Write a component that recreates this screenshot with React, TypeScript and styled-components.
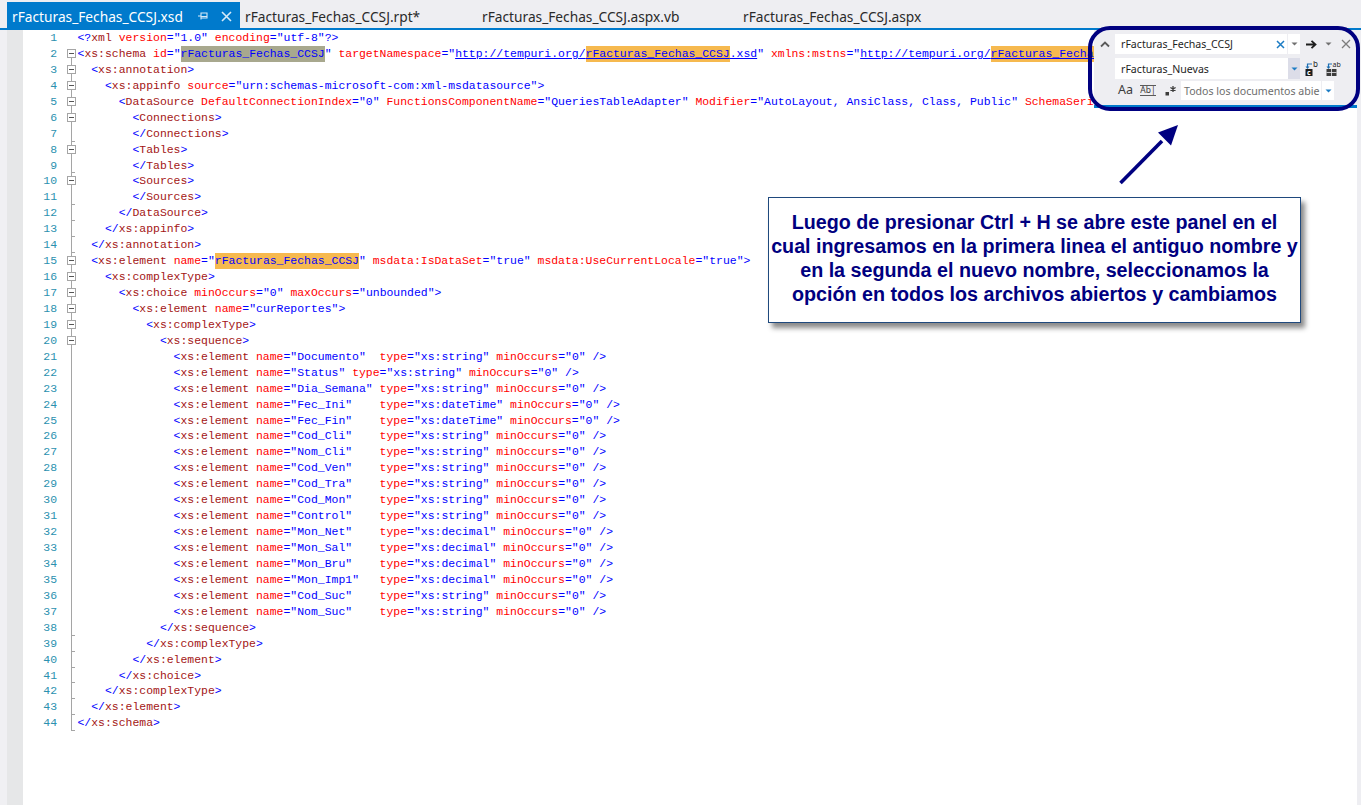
import React from 'react';
import styled, { createGlobalStyle } from 'styled-components';

const NAME = 'rFacturas_Fechas_CCSJ';

const GlobalStyle = createGlobalStyle`
  html, body {
    margin: 0;
    padding: 0;
    background: #ffffff;
    overflow: hidden;
  }
`;

const Page = styled.div`
  position: relative;
  width: 1361px;
  height: 805px;
  overflow: hidden;
  display: flex;
  flex-direction: column;
  background: #ffffff;
`;

const TabStrip = styled.div`
  display: flex;
  height: 28px;
  padding-left: 7px;
  background: #eeeef2;
  border-bottom: 2px solid #007acc;
  flex: none;
`;

const Tab = styled.div<{ $active?: boolean; $width: number }>`
  display: flex;
  align-items: center;
  width: ${(p) => p.$width}px;
  height: 28px;
  margin-top: 2px;
  padding-left: 5px;
  box-sizing: border-box;
  font-family: 'Noto Sans', sans-serif;
  font-size: 13.72px;
  white-space: pre;
  color: ${(p) => (p.$active ? '#ffffff' : '#2a2a2a')};
  background: ${(p) => (p.$active ? '#007acc' : 'transparent')};
`;

const TabIcon = styled.svg<{ $left: number }>`
  margin-left: ${(p) => p.$left}px;
  flex: none;
`;

const Editor = styled.div`
  display: flex;
  flex: 1;
  min-height: 0;
`;

const OuterStrip = styled.div`
  width: 7px;
  background: #f0f0f3;
  flex: none;
`;

const GlyphMargin = styled.div`
  width: 16px;
  background: #e6e7e8;
  flex: none;
`;

const Lines = styled.div`
  flex: 1;
  min-width: 0;
  overflow: hidden;
`;

const ScrollBar = styled.div`
  width: 4px;
  background: #eeeef2;
  flex: none;
`;

const Line = styled.div`
  display: flex;
  height: 15.95px;
  line-height: 16px;
  font-family: 'Liberation Mono', monospace;
  font-size: 11.45px;
  white-space: pre;
`;

const LineNo = styled.div`
  width: 34px;
  text-align: right;
  color: #2b91af;
  flex: none;
`;

const Fold = styled.div<{ $kind: FoldKind }>`
  position: relative;
  width: 20.5px;
  flex: none;

  /* vertical guide of the outlining margin */
  &::before {
    content: '';
    display: ${(p) => (p.$kind === 'none' ? 'none' : 'block')};
    position: absolute;
    left: 14px;
    top: ${(p) => (p.$kind === 'first' ? 8 : 0)}px;
    bottom: 0;
    width: 1px;
    background: #a5a5a5;
  }

  /* tick that closes a block */
  &::after {
    content: '';
    display: ${(p) => (p.$kind === 'end' ? 'block' : 'none')};
    position: absolute;
    left: 14px;
    bottom: 0;
    width: 4px;
    height: 1px;
    background: #a5a5a5;
  }
`;

const FoldBox = styled.span`
  position: absolute;
  left: 10px;
  top: 3px;
  width: 7px;
  height: 7px;
  border: 1px solid #a5a5a5;
  background: #ffffff;

  &::after {
    content: '';
    position: absolute;
    left: 1px;
    top: 3px;
    width: 5px;
    height: 1px;
    background: #555555;
  }
`;

const Code = styled.div`
  flex: none;
`;

const Punct = styled.span`
  color: #0000ff;
`;
const TagName = styled.span`
  color: #a31515;
`;
const Attr = styled.span`
  color: #ff0000;
`;
const Value = styled.span<{ $link?: boolean }>`
  color: #0000ff;
  text-decoration: ${(p) => (p.$link ? 'underline' : 'none')};
`;
const Mark = styled.span<{ $current?: boolean; $link?: boolean }>`
  display: inline-block;
  height: 16px;
  vertical-align: top;
  color: #0000ff;
  background: ${(p) => (p.$current ? '#a8a88e' : '#f6b94f')};
  text-decoration: ${(p) => (p.$link ? 'underline' : 'none')};
`;

const FindRing = styled.div`
  position: absolute;
  left: 1088px;
  top: 26px;
  width: 272px;
  height: 85px;
  box-sizing: border-box;
  padding: 4px 3px 3px 6px;

  &::after {
    content: '';
    position: absolute;
    inset: 0;
    border: 4px solid #000080;
    border-radius: 22px;
  }
`;

const FindPanel = styled.div`
  height: 100%;
  box-sizing: border-box;
  padding-top: 4px;
  background: #eeeef2;
  border-bottom: 3px solid #007acc;
  font-family: 'Noto Sans', sans-serif;
  font-size: 10.6px;
  color: #1e1e1e;
`;

const FindRow = styled.div<{ $height: number; $top?: number }>`
  display: flex;
  align-items: center;
  height: ${(p) => p.$height}px;
  margin-top: ${(p) => p.$top ?? 0}px;
`;

const Slot = styled.div<{ $width: number }>`
  display: flex;
  align-items: center;
  justify-content: center;
  width: ${(p) => p.$width}px;
  height: 100%;
  flex: none;
`;

const Field = styled.div<{ $width: number; $muted?: boolean }>`
  display: flex;
  align-items: center;
  width: ${(p) => p.$width}px;
  height: 100%;
  padding-left: ${(p) => (p.$muted ? 3 : 6)}px;
  box-sizing: border-box;
  background: #ffffff;
  white-space: pre;
  overflow: hidden;
  flex: none;
  color: ${(p) => (p.$muted ? '#6d6d6d' : '#1e1e1e')};
`;

const DropButton = styled.div<{ $width: number; $tone: string; $line?: boolean }>`
  display: flex;
  align-items: center;
  justify-content: center;
  width: ${(p) => p.$width}px;
  height: 100%;
  flex: none;
  background: ${(p) => p.$tone};
  border-left: ${(p) => (p.$line ? '1px solid #eeeef2' : 'none')};
  box-sizing: border-box;
`;

const OptionText = styled.span<{ $under?: boolean }>`
  font-family: 'Noto Sans', sans-serif;
  font-size: ${(p) => (p.$under ? 8.5 : 12.5)}px;
  line-height: 1;
  color: #3c3c3c;
  border-top: ${(p) => (p.$under ? '1px solid #5a5a5a' : 'none')};
  border-bottom: ${(p) => (p.$under ? '1px solid #5a5a5a' : 'none')};
`;

const Callout = styled.div`
  position: absolute;
  left: 768px;
  top: 197px;
  width: 533px;
  height: 126px;
  box-sizing: border-box;
  padding-bottom: 4px;
  display: flex;
  align-items: center;
  justify-content: center;
  text-align: center;
  background: #ffffff;
  border: 1px solid #1f497d;
  box-shadow: 4px 5px 5px #8a8a8a;
  font-family: 'Liberation Sans', Arial, sans-serif;
  font-weight: 700;
  font-size: 19.72px;
  line-height: 24px;
  color: #000080;
  white-space: nowrap;
`;

const ArrowMark = styled.svg`
  position: absolute;
  left: 1110px;
  top: 115px;
`;

type FoldKind = 'none' | 'first' | 'line' | 'end';

const SOURCE: string[] = [
  '<?xml version="1.0" encoding="utf-8"?>',
  `<xs:schema id="${NAME}" targetNamespace="http://tempuri.org/${NAME}.xsd" xmlns:mstns="http://tempuri.org/${NAME}.xsd">`,
  '  <xs:annotation>',
  '    <xs:appinfo source="urn:schemas-microsoft-com:xml-msdatasource">',
  '      <DataSource DefaultConnectionIndex="0" FunctionsComponentName="QueriesTableAdapter" Modifier="AutoLayout, AnsiClass, Class, Public" SchemaSerializationMode="IncludeSchema">',
  '        <Connections>',
  '        </Connections>',
  '        <Tables>',
  '        </Tables>',
  '        <Sources>',
  '        </Sources>',
  '      </DataSource>',
  '    </xs:appinfo>',
  '  </xs:annotation>',
  `  <xs:element name="${NAME}" msdata:IsDataSet="true" msdata:UseCurrentLocale="true">`,
  '    <xs:complexType>',
  '      <xs:choice minOccurs="0" maxOccurs="unbounded">',
  '        <xs:element name="curReportes">',
  '          <xs:complexType>',
  '            <xs:sequence>',
  '              <xs:element name="Documento"  type="xs:string" minOccurs="0" />',
  '              <xs:element name="Status" type="xs:string" minOccurs="0" />',
  '              <xs:element name="Dia_Semana" type="xs:string" minOccurs="0" />',
  '              <xs:element name="Fec_Ini"    type="xs:dateTime" minOccurs="0" />',
  '              <xs:element name="Fec_Fin"    type="xs:dateTime" minOccurs="0" />',
  '              <xs:element name="Cod_Cli"    type="xs:string" minOccurs="0" />',
  '              <xs:element name="Nom_Cli"    type="xs:string" minOccurs="0" />',
  '              <xs:element name="Cod_Ven"    type="xs:string" minOccurs="0" />',
  '              <xs:element name="Cod_Tra"    type="xs:string" minOccurs="0" />',
  '              <xs:element name="Cod_Mon"    type="xs:string" minOccurs="0" />',
  '              <xs:element name="Control"    type="xs:string" minOccurs="0" />',
  '              <xs:element name="Mon_Net"    type="xs:decimal" minOccurs="0" />',
  '              <xs:element name="Mon_Sal"    type="xs:decimal" minOccurs="0" />',
  '              <xs:element name="Mon_Bru"    type="xs:decimal" minOccurs="0" />',
  '              <xs:element name="Mon_Imp1"   type="xs:decimal" minOccurs="0" />',
  '              <xs:element name="Cod_Suc"    type="xs:string" minOccurs="0" />',
  '              <xs:element name="Nom_Suc"    type="xs:string" minOccurs="0" />',
  '            </xs:sequence>',
  '          </xs:complexType>',
  '        </xs:element>',
  '      </xs:choice>',
  '    </xs:complexType>',
  '  </xs:element>',
  '</xs:schema>',
];

// lines with a collapse box in the outlining margin
const FOLDS = [2, 3, 4, 5, 6, 8, 10, 15, 16, 17, 18, 19, 20];
const ENDS = [7, 9, 11, 12, 13, 14, 38, 39, 40, 41, 42, 43, 44];

const foldKind = (n: number): FoldKind => {
  if (n === 1) return 'none';
  if (n === 2) return 'first';
  return ENDS.includes(n) ? 'end' : 'line';
};

const renderValue = (value: string, lineNo: number) => {
  const link = value.startsWith('http');
  const parts = value.split(NAME);
  return parts.map((part, i) => (
    <React.Fragment key={i}>
      {part && <Value $link={link}>{part}</Value>}
      {i < parts.length - 1 && (
        <Mark $link={link} $current={lineNo === 2 && value === NAME}>
          {NAME}
        </Mark>
      )}
    </React.Fragment>
  ));
};

const TOKEN = /(<\?|<\/|<|\?>|\/>|>|=)|([\w:]+)(?==)|"([^"]*)"|([\w:]+)|(\s+)/g;

const renderCode = (text: string, lineNo: number) => {
  const out: React.ReactNode[] = [];
  let k = 0;
  for (const m of text.matchAll(TOKEN)) {
    const [, punct, attr, value, name, space] = m;
    if (punct) out.push(<Punct key={k++}>{punct}</Punct>);
    else if (attr) out.push(<Attr key={k++}>{attr}</Attr>);
    else if (value !== undefined) {
      out.push(
        <React.Fragment key={k++}>
          <Punct>"</Punct>
          {renderValue(value, lineNo)}
          <Punct>"</Punct>
        </React.Fragment>
      );
    } else if (name) out.push(<TagName key={k++}>{name}</TagName>);
    else if (space) out.push(<span key={k++}>{space}</span>);
  }
  return out;
};

const Caret = ({ color = '#717171' }: { color?: string }) => (
  <svg width="7" height="4" viewBox="0 0 7 4">
    <path d="M0.5 0.5h6L3.5 3.5z" fill={color} />
  </svg>
);

const ChevronUp = () => (
  <svg width="10" height="7" viewBox="0 0 10 7">
    <path d="M1 5.5L5 1.5l4 4" fill="none" stroke="#5a5a5a" strokeWidth="1.8" />
  </svg>
);

const ClearX = () => (
  <svg width="9" height="9" viewBox="0 0 9 9">
    <path d="M1 1l7 7M8 1L1 8" stroke="#1c7cc4" strokeWidth="1.5" />
  </svg>
);

const CloseX = () => (
  <svg width="10" height="10" viewBox="0 0 10 10">
    <path d="M1 1l8 8M9 1L1 9" stroke="#7d7d7d" strokeWidth="1.3" />
  </svg>
);

const GoArrow = () => (
  <svg width="11" height="9" viewBox="0 0 11 9">
    <path d="M0 4.5h9M5.5 0.8l4 3.7-4 3.7" fill="none" stroke="#1e1e1e" strokeWidth="1.8" />
  </svg>
);

const ReplaceOne = () => (
  <svg width="15" height="16" viewBox="0 0 15 16">
    <path d="M7 3H2.5V6" fill="none" stroke="#1c6fb4" strokeWidth="1.2" />
    <path d="M0.5 5.5h4L2.5 8z" fill="#1c6fb4" />
    <rect x="0.5" y="8" width="7" height="7" fill="#1e1e1e" />
    <text x="2" y="14" fontFamily="Noto Sans" fontSize="7" fontWeight="700" fill="#ffffff">c</text>
    <text x="8" y="6" fontFamily="Noto Sans" fontSize="8" fill="#1e1e1e">b</text>
  </svg>
);

const ReplaceAll = () => (
  <svg width="15" height="16" viewBox="0 0 15 16">
    <path d="M6 3H2.5V6" fill="none" stroke="#1c6fb4" strokeWidth="1.2" />
    <path d="M0.5 5.5h4L2.5 8z" fill="#1c6fb4" />
    <rect x="0.5" y="8" width="10" height="7" fill="#3c3c3c" />
    <path d="M5.5 8v7M0.5 11.5h10" stroke="#eeeef2" strokeWidth="0.8" />
    <text x="6.5" y="6" fontFamily="Noto Sans" fontSize="7" fill="#1e1e1e">ab</text>
  </svg>
);

const RegexIcon = () => (
  <svg width="12" height="11" viewBox="0 0 12 11">
    <rect x="0.5" y="7" width="3.5" height="3.5" fill="#3c3c3c" />
    <path d="M8 1v6M5.4 2.5l5.2 3M10.6 2.5l-5.2 3" stroke="#3c3c3c" strokeWidth="1.3" />
  </svg>
);

export default function App() {
  return (
    <Page>
      <GlobalStyle />
      <TabStrip>
        <Tab $active $width={233}>
          {NAME}.xsd
          <TabIcon $left={14} width="12" height="12" viewBox="0 0 12 12">
            <path d="M1 6h3M4 2.5v7M4 3h6v5H4M4 6.5h6" fill="none" stroke="#d6eaf8" strokeWidth="1.1" />
          </TabIcon>
          <TabIcon $left={12} width="11" height="11" viewBox="0 0 11 11">
            <path d="M1 1l9 9M10 1L1 10" stroke="#d6eaf8" strokeWidth="1.6" />
          </TabIcon>
        </Tab>
        <Tab $width={237}>{NAME}.rpt*</Tab>
        <Tab $width={261}>{NAME}.aspx.vb</Tab>
        <Tab $width={240}>{NAME}.aspx</Tab>
      </TabStrip>

      <Editor>
        <OuterStrip />
        <GlyphMargin />
        <Lines>
          {SOURCE.map((text, i) => {
            const n = i + 1;
            return (
              <Line key={n}>
                <LineNo>{n}</LineNo>
                <Fold $kind={foldKind(n)}>{FOLDS.includes(n) && <FoldBox />}</Fold>
                <Code>{renderCode(text, n)}</Code>
              </Line>
            );
          })}
        </Lines>
        <ScrollBar />
      </Editor>

      <FindRing>
        <FindPanel>
          <FindRow $height={20}>
            <Slot $width={21}>
              <ChevronUp />
            </Slot>
            <Field $width={159}>{NAME}</Field>
            <DropButton $width={13} $tone="#ffffff">
              <ClearX />
            </DropButton>
            <DropButton $width={13} $tone="#ffffff" $line>
              <Caret />
            </DropButton>
            <Slot $width={22}>
              <GoArrow />
            </Slot>
            <Slot $width={12}>
              <Caret />
            </Slot>
            <Slot $width={23}>
              <CloseX />
            </Slot>
          </FindRow>
          <FindRow $height={21} $top={4}>
            <Slot $width={21} />
            <Field $width={173}>rFacturas_Nuevas</Field>
            <DropButton $width={12} $tone="#dcdde8">
              <Caret color="#1c7cc4" />
            </DropButton>
            <Slot $width={25}>
              <ReplaceOne />
            </Slot>
            <Slot $width={16}>
              <ReplaceAll />
            </Slot>
          </FindRow>
          <FindRow $height={19} $top={2}>
            <Slot $width={21} />
            <Slot $width={21}>
              <OptionText>Aa</OptionText>
            </Slot>
            <Slot $width={24}>
              <OptionText $under>Ab|</OptionText>
            </Slot>
            <Slot $width={21}>
              <RegexIcon />
            </Slot>
            <Field $width={140} $muted>
              Todos los documentos abie
            </Field>
            <DropButton $width={13} $tone="#ffffff" $line>
              <Caret color="#1c7cc4" />
            </DropButton>
          </FindRow>
        </FindPanel>
      </FindRing>

      <ArrowMark width="80" height="80" viewBox="0 0 80 80">
        <path d="M10.5 68L52 26" stroke="#000080" strokeWidth="3.6" fill="none" />
        <path d="M68 10L48 17.5L61 30.5z" fill="#000080" />
      </ArrowMark>

      <Callout>
        <div>
          Luego de presionar Ctrl + H se abre este panel en el
          <br />
          cual ingresamos en la primera linea el antiguo nombre y
          <br />
          en la segunda el nuevo nombre, seleccionamos la
          <br />
          opción en todos los archivos abiertos y cambiamos
        </div>
      </Callout>
    </Page>
  );
}
